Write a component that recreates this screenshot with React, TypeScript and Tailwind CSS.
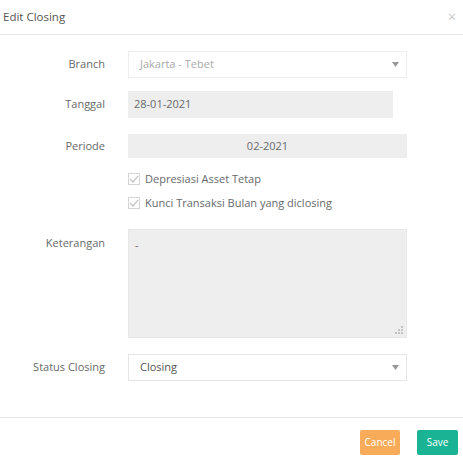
const font = { fontFamily: '"Open Sans", "Liberation Sans", sans-serif' };

function Caret() {
  return (
    <svg width="7" height="5" viewBox="0 0 7 5" className="shrink-0">
      <path d="M0 0 H7 L3.5 5 Z" fill="#999" />
    </svg>
  );
}

function Check() {
  return (
    <span className="flex h-[12px] w-[12px] shrink-0 items-center justify-center border border-[#d5d5d5] bg-white">
      <svg width="10" height="8" viewBox="0 0 10 8">
        <path d="M1 4 L4 7 L9 1" fill="none" stroke="#c4c4c4" strokeWidth="1.2" />
      </svg>
    </span>
  );
}

function Row({
  label,
  children,
  className = "",
  labelClass = "",
}: {
  label: string;
  children: React.ReactNode;
  className?: string;
  labelClass?: string;
}) {
  return (
    <div className={`flex ${className}`}>
      <div className={`w-[105px] shrink-0 text-right text-[11px] text-[#676a6c] ${labelClass}`}>{label}</div>
      <div className="ml-[23px] flex-1">{children}</div>
    </div>
  );
}

export default function App() {
  return (
    <div className="h-[460px] w-[463px] bg-white text-[#676a6c]" style={font}>
      <div className="flex h-[35px] items-center justify-between border-b border-[#e5e5e5] pl-[3px] pr-[7px]">
        <span className="text-[11.5px] text-[#555]">Edit Closing</span>
        <span className="text-[14px] leading-none text-[#c8c8c8]">×</span>
      </div>

      <div className="pr-[56px]">
        <Row label="Branch" className="mt-[16px] items-center">
          <div className="flex h-[27px] items-center justify-between border border-[#eeeeee] bg-white pl-[11px] pr-[7px] text-[11px] text-[#aaaaaa]">
            <span>Jakarta - Tebet</span>
            <Caret />
          </div>
        </Row>

        <Row label="Tanggal" className="mt-[13px] items-center">
          <div className="flex h-[27px] w-[265px] items-center bg-[#eeeeee] px-[6px] text-[11px] text-[#676a6c]">
            28-01-2021
          </div>
        </Row>

        <Row label="Periode" className="mt-[16px] items-center">
          <div className="flex h-[24px] items-center justify-center bg-[#eeeeee] text-[11px] text-[#676a6c]">
            02-2021
          </div>
        </Row>

        <Row label="" className="mt-[15px]">
          <div className="flex flex-col gap-[12px] text-[11px] text-[#676a6c]">
            <label className="flex h-[12px] items-center gap-[5px]">
              <Check />
              <span>Depresiasi Asset Tetap</span>
            </label>
            <label className="flex h-[12px] items-center gap-[5px]">
              <Check />
              <span>Kunci Transaksi Bulan yang diclosing</span>
            </label>
          </div>
        </Row>

        <Row label="Keterangan" className="mt-[20px]" labelClass="pt-[6px]">
          <div className="relative h-[109px] border border-[#e8e8e8] bg-[#eeeeee] px-[6px] pt-[7px] text-[11px] text-[#676a6c]">
            -
            <svg width="8" height="8" viewBox="0 0 8 8" className="absolute bottom-[3px] right-[3px]">
              <g fill="#c4c4c4">
                <rect x="6" y="0" width="2" height="2" />
                <rect x="3" y="3" width="2" height="2" />
                <rect x="6" y="3" width="2" height="2" />
                <rect x="0" y="6" width="2" height="2" />
                <rect x="3" y="6" width="2" height="2" />
                <rect x="6" y="6" width="2" height="2" />
              </g>
            </svg>
          </div>
        </Row>

        <Row label="Status Closing" className="mt-[16px] items-center">
          <div className="flex h-[27px] items-center justify-between border border-[#e5e5e5] bg-white pl-[11px] pr-[7px] text-[11px] text-[#555]">
            <span>Closing</span>
            <Caret />
          </div>
        </Row>
      </div>

      <div className="mt-[36px] flex justify-end gap-[17px] border-t border-[#e5e5e5] pr-[5px] pt-[12px]">
        <button className="h-[25px] w-[40px] rounded-[2px] bg-[#f8ac59] text-[10px] text-white">Cancel</button>
        <button className="h-[25px] w-[41px] rounded-[2px] bg-[#1ab394] text-[10px] text-white">Save</button>
      </div>
    </div>
  );
}
